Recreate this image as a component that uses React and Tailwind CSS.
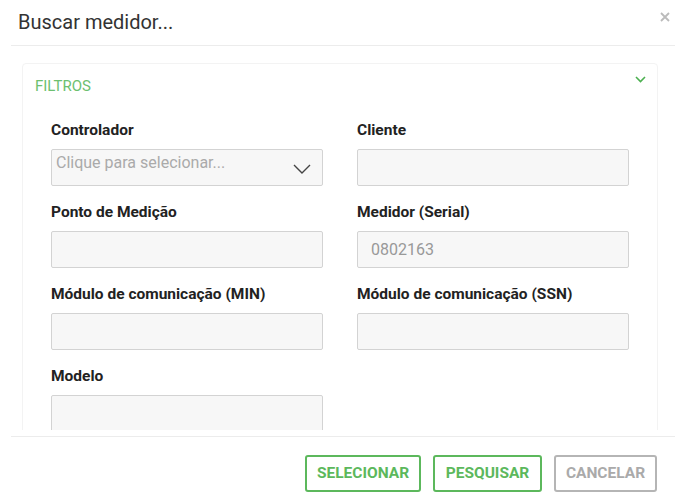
import React from 'react';

const Field = ({ label, children }) => (
  <div>
    <div className="text-[15.5px] font-bold text-[#222] leading-[20px] mb-[9px]">{label}</div>
    {children}
  </div>
);

const Input = ({ value }) => (
  <div className="h-[37px] bg-[#f7f7f7] border border-[#d3d3d3] rounded-[2px] flex items-center px-[13px] text-[16px] text-[#999]">
    {value}
  </div>
);

export default function App() {
  return (
    <div
      className="w-[686px] h-[504px] bg-white flex flex-col overflow-hidden"
      style={{ fontFamily: 'Roboto, "Liberation Sans", sans-serif' }}
    >
      {/* Header */}
      <div className="h-[46px] mx-[11px] border-b border-[#ececec] flex items-center justify-between pl-[7px] pr-[5px] shrink-0">
        <h1 className="text-[20px] text-[#333] leading-none -mt-[2px]">Buscar medidor...</h1>
        <svg className="w-[10px] h-[10px] -mt-[12px]" viewBox="0 0 10 10">
          <path d="M1 1L9 9M9 1L1 9" stroke="#bbb" strokeWidth="1.8" />
        </svg>
      </div>

      {/* Body */}
      <div className="h-[384px] overflow-hidden px-[22px] pt-[17px] shrink-0">
        <div className="w-[636px] border border-[#f3f3f3] rounded-[4px]">
          <div className="h-[43px] flex items-center justify-between pl-[12px] pr-[11px]">
            <span className="text-[15px] text-[#6cc070] mt-[1px]">FILTROS</span>
            <svg className="w-[11px] h-[7px] -mt-[12px]" viewBox="0 0 11 7">
              <path d="M1 1L5.5 5.5L10 1" fill="none" stroke="#4cb050" strokeWidth="1.6" />
            </svg>
          </div>
          <div className="px-[28px] pt-[13px] grid grid-cols-2 gap-x-[34px] gap-y-[16px] pb-[20px]">
            <Field label="Controlador">
              <div className="h-[37px] bg-[#f7f7f7] border border-[#d3d3d3] rounded-[2px] flex justify-between pl-[4px] pr-[11px]">
                <span className="text-[16px] text-[#aaa] mt-[1px]">Clique para selecionar...</span>
                <svg className="w-[18px] h-[10px] mt-[14px]" viewBox="0 0 18 10">
                  <path d="M1 1L9 9L17 1" fill="none" stroke="#444" strokeWidth="1.4" />
                </svg>
              </div>
            </Field>
            <Field label="Cliente">
              <Input />
            </Field>
            <Field label="Ponto de Medição">
              <Input />
            </Field>
            <Field label="Medidor (Serial)">
              <Input value="0802163" />
            </Field>
            <Field label="Módulo de comunicação (MIN)">
              <Input />
            </Field>
            <Field label="Módulo de comunicação (SSN)">
              <Input />
            </Field>
            <Field label="Modelo">
              <Input />
            </Field>
          </div>
        </div>
      </div>

      {/* Footer */}
      <div className="mt-[6px] mx-[11px] border-t border-[#ececec] flex justify-end items-start pt-[18px] pr-[18px] gap-[12px]">
        <button className="h-[37px] w-[116px] border-2 border-[#5cb85c] rounded-[3px] text-[15.5px] font-bold text-[#5cb85c]">
          SELECIONAR
        </button>
        <button className="h-[37px] w-[109px] border-2 border-[#5cb85c] rounded-[3px] text-[15.5px] font-bold text-[#5cb85c]">
          PESQUISAR
        </button>
        <button className="h-[37px] w-[103px] border-2 border-[#b5b5b5] rounded-[3px] text-[15.5px] font-bold text-[#aaa]">
          CANCELAR
        </button>
      </div>
    </div>
  );
}
